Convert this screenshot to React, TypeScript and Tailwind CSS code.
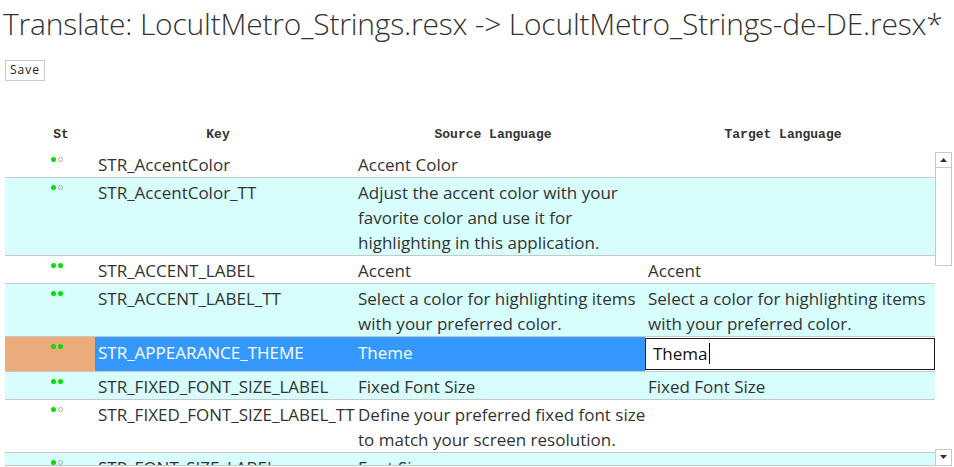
import React from "react";

type Row = {
  key: string;
  src: string[];
  tgt: string[];
  full: boolean;
  bg: "white" | "cyan" | "sel";
};

const rows: Row[] = [
  { key: "STR_AccentColor", src: ["Accent Color"], tgt: [], full: false, bg: "white" },
  {
    key: "STR_AccentColor_TT",
    src: ["Adjust the accent color with your", "favorite color and use it for", "highlighting in this application."],
    tgt: [],
    full: false,
    bg: "cyan",
  },
  { key: "STR_ACCENT_LABEL", src: ["Accent"], tgt: ["Accent"], full: true, bg: "white" },
  {
    key: "STR_ACCENT_LABEL_TT",
    src: ["Select a color for highlighting items", "with your preferred color."],
    tgt: ["Select a color for highlighting items", "with your preferred color."],
    full: true,
    bg: "cyan",
  },
  { key: "STR_APPEARANCE_THEME", src: ["Theme"], tgt: ["Thema"], full: true, bg: "sel" },
  { key: "STR_FIXED_FONT_SIZE_LABEL", src: ["Fixed Font Size"], tgt: ["Fixed Font Size"], full: true, bg: "cyan" },
  {
    key: "STR_FIXED_FONT_SIZE_LABEL_TT",
    src: ["Define your preferred fixed font size", "to match your screen resolution."],
    tgt: [],
    full: false,
    bg: "white",
  },
  { key: "STR_FONT_SIZE_LABEL", src: ["Font Size"], tgt: [], full: false, bg: "cyan" },
];

function Dots({ full }: { full: boolean }) {
  return (
    <div className="flex items-center gap-[2px] pl-[46px] pt-[7px]">
      <span className="block w-[5px] h-[5px] rounded-full bg-[#00e000]" />
      {full ? (
        <span className="block w-[5px] h-[5px] rounded-full bg-[#00e000]" />
      ) : (
        <span className="block w-[5px] h-[5px] rounded-full border border-[#b0b0b0]" />
      )}
    </div>
  );
}

function Lines({ lines }: { lines: string[] }) {
  return (
    <>
      {lines.map((l, i) => (
        <div key={i} className="whitespace-nowrap">
          {l}
        </div>
      ))}
    </>
  );
}

function TableRow({ r }: { r: Row }) {
  const sel = r.bg === "sel";
  const rowBg = r.bg === "cyan" ? "bg-[#d7fdfd]" : "bg-white";
  return (
    <div className={`flex border-b border-[#c8c8c8] ${rowBg}`}>
      <div className={`w-[90px] shrink-0 ${sel ? "bg-[#ebab7b]" : ""}`}>
        <Dots full={r.full} />
      </div>
      <div className={`w-[260px] shrink-0 pl-[3px] whitespace-nowrap ${sel ? "bg-[#3399ff] text-white pt-[3px]" : "pt-[2px]"}`}>
        {r.key}
      </div>
      <div className={`w-[290px] shrink-0 pl-[3px] ${sel ? "bg-[#3399ff] text-white pt-[3px]" : "pt-[2px]"}`}>
        <Lines lines={r.src} />
      </div>
      {sel ? (
        <div className="w-[290px] shrink-0 py-[1px]">
          <div className="h-[32px] border border-[#1a1a1a] bg-white flex items-center pl-[7px] text-[#111]">
            <span>{r.tgt[0]}</span>
            <span className="inline-block w-[1px] h-[21px] bg-black ml-[1px]" />
          </div>
        </div>
      ) : (
        <div className="w-[290px] shrink-0 pt-[2px] pl-[3px]">
          <Lines lines={r.tgt} />
        </div>
      )}
    </div>
  );
}

export default function App() {
  return (
    <div
      className="w-[954px] h-[467px] overflow-hidden bg-white text-[#333]"
      style={{ fontFamily: '"Open Sans", "Noto Sans", sans-serif' }}
    >
      <h1 className="pl-[3px] pt-[6px] text-[30px] leading-[36px] font-light tracking-[-0.2px] text-[#333] whitespace-nowrap">
        Translate: LocultMetro_Strings.resx -&gt; LocultMetro_Strings-de-DE.resx*
      </h1>
      <div className="pl-[5px] mt-[14px]">
        <button className="h-[21px] px-[4px] border border-[#c8c8c8] bg-white text-[12px] leading-[18px] tracking-[1px] text-[#222]">
          Save
        </button>
      </div>
      <div
        className="flex mt-[46px] pl-[5px] text-[13px] leading-[16px] font-bold text-[#333]"
        style={{ fontFamily: '"Liberation Mono", "DejaVu Sans Mono", monospace' }}
      >
        <div className="w-[112px] text-center">St</div>
        <div className="w-[202px] text-center">Key</div>
        <div className="w-[348px] text-center">Source Language</div>
        <div className="w-[232px] text-center">Target Language</div>
      </div>
      <div className="flex mt-[7px] pl-[5px] h-[317px] text-[17px] leading-[25px]">
        <div className="w-[930px] h-[316px] overflow-hidden border-b border-[#c8c8c8]">
          {rows.map((r) => (
            <TableRow key={r.key} r={r} />
          ))}
        </div>
        <div className="w-[17px] h-[316px] flex flex-col">
          <div className="h-[2px]" />
          <div className="h-[16px] border border-[#c8c8c8] flex items-center justify-center">
            <svg width="7" height="4" viewBox="0 0 7 4">
              <path d="M0 4 L3.5 0 L7 4 Z" fill="#333" />
            </svg>
          </div>
          <div className="h-[98px] border border-t-0 border-[#c8c8c8]" />
          <div className="flex-1" />
          <div className="h-[17px] border border-[#c8c8c8] flex items-center justify-center">
            <svg width="7" height="4" viewBox="0 0 7 4">
              <path d="M0 0 L3.5 4 L7 0 Z" fill="#333" />
            </svg>
          </div>
        </div>
      </div>
    </div>
  );
}
